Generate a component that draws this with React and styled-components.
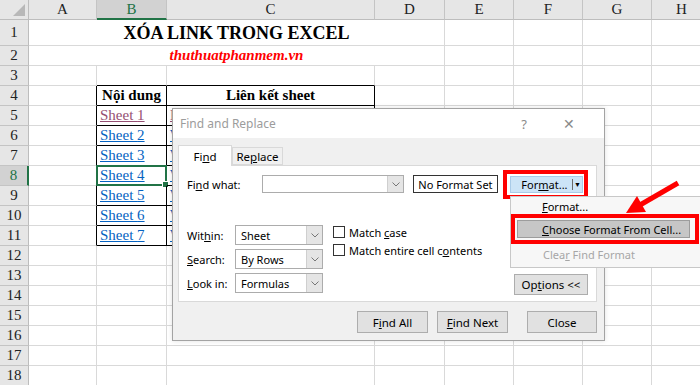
import React from 'react'
import styled, { createGlobalStyle } from 'styled-components'

const GlobalStyle = createGlobalStyle`
  html, body { margin: 0; padding: 0; background: #fff; }
  body { width: 700px; height: 385px; overflow: hidden; }
`

const GRID = '#d9d9d9'
const INK = '#000'
const GREEN = '#217346'

const Page = styled.div`
  position: relative;
  width: 700px;
  height: 385px;
  overflow: hidden;
  font-family: "Liberation Serif", "Times New Roman", serif;
`

const Sheet = styled.div`
  display: grid;
  grid-template-columns: 29px 68px 70px 208px 70px 69px 69px 69px 60px;
  grid-template-rows: 20px 26px repeat(17, 20px);
`

const Corner = styled.div`
  position: relative;
  background: #e6e6e6;
  border-right: 1px solid #bdbdbd;
  border-bottom: 1px solid #bdbdbd;
  &::after {
    content: '';
    position: absolute;
    right: 3px;
    bottom: 3px;
    border-left: 12px solid transparent;
    border-bottom: 12px solid #b8b8b8;
  }
`

const ColHead = styled.div`
  display: flex;
  align-items: center;
  justify-content: center;
  background: ${p => (p.$active ? '#d2d2d2' : '#e6e6e6')};
  border-right: 1px solid #c4c4c4;
  border-bottom: ${p => (p.$active ? `2px solid ${GREEN}` : '1px solid #bdbdbd')};
  color: ${p => (p.$active ? GREEN : '#222')};
  font-size: 15px;
`

const RowHead = styled.div`
  display: flex;
  align-items: center;
  justify-content: center;
  background: ${p => (p.$active ? '#d2d2d2' : '#e6e6e6')};
  border-right: ${p => (p.$active ? `2px solid ${GREEN}` : '1px solid #bdbdbd')};
  border-bottom: 1px solid #c4c4c4;
  color: ${p => (p.$active ? GREEN : '#222')};
  font-size: 15px;
`

const Cell = styled.div`
  position: relative;
  grid-column: span ${p => p.$span || 1};
  display: flex;
  align-items: center;
  justify-content: ${p => p.$align || 'flex-start'};
  padding: 0 3px;
  border-right: 1px solid ${p => p.$r || GRID};
  border-bottom: 1px solid ${p => p.$b || GRID};
  font-size: 15px;
  white-space: nowrap;
  min-width: 0;
`

const Selection = styled.div`
  position: absolute;
  left: -1px;
  top: -1px;
  right: -1px;
  bottom: -1px;
  border: 2px solid ${GREEN};
  pointer-events: none;
  &::after {
    content: '';
    position: absolute;
    right: -4px;
    bottom: -4px;
    width: 5px;
    height: 5px;
    background: ${GREEN};
    border: 1px solid #fff;
  }
`

const Title = styled.span`
  font-weight: bold;
  font-size: 18px;
  padding-top: 2px;
`

const Site = styled.span`
  font-weight: bold;
  font-style: italic;
  color: #ff0000;
  font-size: 15px;
`

const Head = styled.span`
  font-weight: bold;
`

const Link = styled.span`
  color: ${p => (p.$visited ? '#954f72' : '#0563c1')};
  text-decoration: underline;
`

/* ---------- dialog ---------- */

const Dialog = styled.div`
  position: absolute;
  left: 172px;
  top: 108px;
  width: 433px;
  height: 233px;
  box-sizing: border-box;
  display: flex;
  flex-direction: column;
  background: #f0f0f0;
  border: 1px solid #a3a3a3;
  box-shadow: 0 0 5px rgba(0, 0, 0, 0.12);
  font-family: "Noto Sans", "Open Sans", sans-serif;
  font-size: 11px;
  color: #000;
`

const TitleBar = styled.div`
  height: 29px;
  flex: none;
  display: flex;
  align-items: center;
  padding-left: 7px;
  background: #fff;
  color: #9c9c9c;
  font-size: 12px;
`

const TitleText = styled.span`
  flex: 1;
`

const TitleIcon = styled.span`
  width: ${p => p.$w}px;
  text-align: center;
  color: #8a8a8a;
  font-size: ${p => p.$size}px;
`

const Body = styled.div`
  flex: 1;
  display: flex;
  flex-direction: column;
  padding: 7px 7px 0 5px;
`

const Tabs = styled.div`
  display: flex;
  align-items: flex-end;
  height: 20px;
`

const Tab = styled.div`
  position: relative;
  z-index: ${p => (p.$active ? 2 : 1)};
  width: ${p => p.$w}px;
  height: ${p => (p.$active ? 21 : 18)}px;
  box-sizing: border-box;
  display: flex;
  align-items: center;
  justify-content: center;
  margin-bottom: ${p => (p.$active ? -1 : 0)}px;
  background: ${p => (p.$active ? '#fff' : '#f0f0f0')};
  border: 1px solid #d9d9d9;
  border-bottom: ${p => (p.$active ? 'none' : '1px solid #d9d9d9')};
  font-size: 11.5px;
`

const Panel = styled.div`
  height: 137px;
  box-sizing: border-box;
  padding: 9px 8px 8px 8px;
  display: flex;
  flex-direction: column;
  background: #fff;
  border: 1px solid #d9d9d9;
`

const FindRow = styled.div`
  display: flex;
  align-items: center;
  height: 18px;
`

const Label = styled.span`
  width: ${p => p.$w}px;
  flex: none;
`

const Combo = styled.div`
  width: ${p => p.$w}px;
  height: ${p => p.$h}px;
  box-sizing: border-box;
  flex: none;
  display: flex;
  background: #fff;
  border: 1px solid #acacac;
`

const ComboText = styled.span`
  flex: 1;
  display: flex;
  align-items: center;
  padding-left: 5px;
`

const ComboArrow = styled.span`
  width: 15px;
  display: flex;
  align-items: center;
  justify-content: center;
  background: #e5e5e5;
  border-left: 1px solid #cfcfcf;
`

const PlainButton = styled.div`
  width: ${p => p.$w}px;
  height: 18px;
  box-sizing: border-box;
  margin-left: 9px;
  display: flex;
  align-items: center;
  justify-content: center;
  background: #fff;
  border: 1px solid #333;
`

const RedBox = styled.div`
  display: flex;
  box-sizing: border-box;
  border: 4px solid #ff0000;
  padding: ${p => p.$pad};
`

const FormatRed = styled(RedBox)`
  margin-left: 5px;
  width: 87px;
  height: 29px;
  margin-top: 1px;
`

const SplitButton = styled.div`
  flex: 1;
  display: flex;
  align-items: center;
  background: #cce4f7;
  border: 1px solid #a9cbe8;
`

const SplitMain = styled.span`
  flex: 1;
  text-align: center;
  padding-left: 6px;
`

const SplitSep = styled.span`
  width: 1px;
  height: 11px;
  background: #6a6a6a;
`

const SplitDrop = styled.span`
  width: 9px;
  display: flex;
  justify-content: center;
  font-size: 7px;
`

const Options = styled.div`
  display: flex;
  margin-top: 32px;
  flex: 1;
`

const OptionGrid = styled.div`
  display: grid;
  grid-template-columns: 48px 88px;
  grid-auto-rows: 20px;
  row-gap: 4px;
  align-items: center;
`

const Checks = styled.div`
  display: flex;
  flex-direction: column;
  gap: 6px;
  margin-left: 10px;
  padding-top: 1px;
`

const CheckRow = styled.label`
  display: flex;
  align-items: center;
  gap: 4px;
  height: 12px;
`

const Box = styled.span`
  width: 12px;
  height: 12px;
  box-sizing: border-box;
  background: #fff;
  border: 1px solid #333;
`

const GrayButton = styled.div`
  width: ${p => p.$w}px;
  height: ${p => p.$h}px;
  box-sizing: border-box;
  flex: none;
  display: flex;
  align-items: center;
  justify-content: center;
  margin-left: ${p => p.$ml || 0}px;
  background: #e1e1e1;
  border: 1px solid #adadad;
  font-size: 11.5px;
`

const OptionsButton = styled(GrayButton)`
  margin-left: auto;
  align-self: flex-end;
  margin-bottom: -2px;
`

const Footer = styled.div`
  display: flex;
  justify-content: flex-end;
  margin-top: 9px;
`

/* ---------- dropdown menu ---------- */

const Menu = styled.div`
  position: absolute;
  left: 510px;
  top: 196px;
  width: 200px;
  height: 72px;
  box-sizing: border-box;
  padding-top: 1px;
  display: flex;
  flex-direction: column;
  background: #f7f7f7;
  border: 1px solid #c8c8c8;
  font-family: "Noto Sans", "Open Sans", sans-serif;
  font-size: 11px;
`

const MenuItem = styled.div`
  height: ${p => p.$h}px;
  display: flex;
  align-items: center;
  padding-left: ${p => p.$pl || 31}px;
  color: ${p => (p.$disabled ? '#a6a6a6' : '#000')};
`

const MenuRed = styled(RedBox)`
  width: 188px;
  height: 30px;
`

const Highlight = styled.div`
  flex: 1;
  display: flex;
  align-items: center;
  padding-left: 24px;
  background: #c6c6c6;
  border: 1px solid #9c9c9c;
`

const Arrow = styled.svg`
  position: absolute;
  left: 610px;
  top: 175px;
  overflow: visible;
`

const Chevron = () => (
  <svg width="8" height="5" viewBox="0 0 8 5">
    <path d="M0.5 0.5 L4 4 L7.5 0.5" fill="none" stroke="#777" strokeWidth="1" />
  </svg>
)

const Select = ({ value, w, h }) => (
  <Combo $w={w} $h={h}>
    <ComboText>{value}</ComboText>
    <ComboArrow>
      <Chevron />
    </ComboArrow>
  </Combo>
)

const cols = ['A', 'B', 'C', 'D', 'E', 'F', 'G', 'H']
const heights = [26, ...Array(17).fill(20)]

const links = ['Nhấn vào đây', 'Website', 'Website', 'Website', 'Website', 'Website', 'Website']

function cellBorder(r, c) {
  return {
    $r: r >= 4 && r <= 11 && c <= 2 ? INK : GRID,
    $b: r >= 3 && r <= 11 && (c === 1 || c === 2) ? INK : GRID,
  }
}

function rowCells(r) {
  if (r === 1 || r === 2) {
    return [
      <Cell key="m" $span={4} $align="center">
        {r === 1 ? <Title>XÓA LINK TRONG EXCEL</Title> : <Site>thuthuatphanmem.vn</Site>}
      </Cell>,
      ...cols.slice(4).map(c => <Cell key={c} />),
    ]
  }
  return cols.map((c, i) => {
    let content = null
    let align
    if (r === 4 && i === 1) { content = <Head>Nội dung</Head>; align = 'center' }
    if (r === 4 && i === 2) { content = <Head>Liên kết sheet</Head>; align = 'center' }
    if (r >= 5 && r <= 11 && i === 1) content = <Link $visited={r === 5}>Sheet {r - 4}</Link>
    if (r >= 5 && r <= 11 && i === 2) content = <Link $visited={r === 5}>{links[r - 5]}</Link>
    return (
      <Cell key={c} $align={align} {...cellBorder(r, i)}>
        {content}
        {r === 8 && i === 1 && <Selection />}
      </Cell>
    )
  })
}

const App = () => {
  return (
    <Page>
      <GlobalStyle />
      <Sheet>
        <Corner />
        {cols.map(c => (
          <ColHead key={c} $active={c === 'B'}>{c}</ColHead>
        ))}
        {heights.map((h, idx) => {
          const r = idx + 1
          return (
            <React.Fragment key={r}>
              <RowHead $active={r === 8}>{r}</RowHead>
              {rowCells(r)}
            </React.Fragment>
          )
        })}
      </Sheet>

      <Dialog>
        <TitleBar>
          <TitleText>Find and Replace</TitleText>
          <TitleIcon $w={20} $size={13}>?</TitleIcon>
          <TitleIcon $w={70} $size={14}>✕</TitleIcon>
        </TitleBar>
        <Body>
          <Tabs>
            <Tab $active $w={54}><span>Fi<u>n</u>d</span></Tab>
            <Tab $w={51}><span>Re<u>p</u>lace</span></Tab>
          </Tabs>
          <Panel>
            <FindRow>
              <Label $w={75}>Fi<u>n</u>d what:</Label>
              <Select value="" w={142} h={18} />
              <PlainButton $w={87}>No Format Set</PlainButton>
              <FormatRed $pad="2px 1px 2px 3px">
                <SplitButton>
                  <SplitMain>For<u>m</u>at...</SplitMain>
                  <SplitSep />
                  <SplitDrop>▼</SplitDrop>
                </SplitButton>
              </FormatRed>
            </FindRow>
            <Options>
              <OptionGrid>
                <Label>Wit<u>h</u>in:</Label>
                <Select value="Sheet" w={88} h={20} />
                <Label><u>S</u>earch:</Label>
                <Select value="By Rows" w={88} h={20} />
                <Label><u>L</u>ook in:</Label>
                <Select value="Formulas" w={88} h={20} />
              </OptionGrid>
              <Checks>
                <CheckRow><Box /><span>Match <u>c</u>ase</span></CheckRow>
                <CheckRow><Box /><span>Match entire cell c<u>o</u>ntents</span></CheckRow>
              </Checks>
              <OptionsButton $w={74} $h={21}><span>Op<u>t</u>ions &lt;&lt;</span></OptionsButton>
            </Options>
          </Panel>
          <Footer>
            <GrayButton $w={71} $h={22}><span>F<u>i</u>nd All</span></GrayButton>
            <GrayButton $w={71} $h={22} $ml={9}><span><u>F</u>ind Next</span></GrayButton>
            <GrayButton $w={70} $h={22} $ml={19}>Close</GrayButton>
          </Footer>
        </Body>
      </Dialog>

      <Menu>
        <MenuItem $h={16}><span><u>F</u>ormat...</span></MenuItem>
        <MenuRed $pad="2px 5px 2px 2px">
          <Highlight><span><u>C</u>hoose Format From Cell...</span></Highlight>
        </MenuRed>
        <MenuItem $h={20} $pl={32} $disabled><span>Clea<u>r</u> Find Format</span></MenuItem>
      </Menu>

      <Arrow width="80" height="45" viewBox="0 0 80 45">
        <line x1="68" y1="8" x2="30" y2="30" stroke="#ff0000" strokeWidth="5" />
        <polygon points="16,38 36,37 27,21" fill="#ff0000" />
      </Arrow>
    </Page>
  )
}

export default App
